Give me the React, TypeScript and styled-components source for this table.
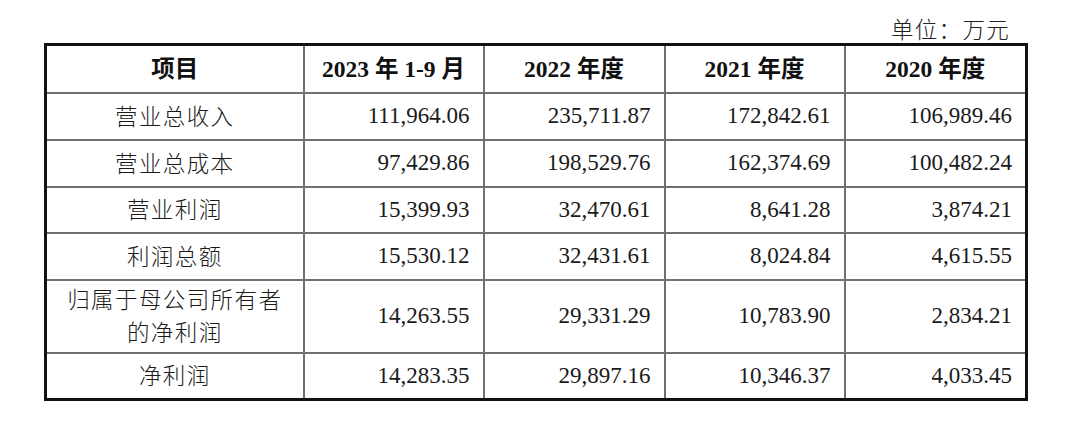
import React from "react";
import styled, { createGlobalStyle } from "styled-components";

const Global = createGlobalStyle`
  html, body { margin: 0; padding: 0; background: #ffffff; }
  body { font-family: "Liberation Serif", "Noto Sans CJK SC", serif; color: #1a1a1a; }
`;

const Page = styled.div`
  width: 1080px;
  height: 435px;
  box-sizing: border-box;
  padding: 15px 0 0 44px;
`;

const Sheet = styled.div`
  width: 981px;
  display: flex;
  flex-direction: column;
`;

const Unit = styled.div`
  align-self: flex-end;
  margin-right: 15px;
  font-size: 22.5px;
  letter-spacing: 1.3px;
  line-height: 26px;
  height: 28px;
  font-weight: 300;
  font-family: "Noto Sans CJK SC", serif;
  color: #222;
`;

const Table = styled.table`
  width: 981px;
  border-collapse: collapse;
  table-layout: fixed;
  border: 3px solid #111;
  font-size: 23px;
`;

const Cell = styled.td<{ $align?: "center" | "right"; $bold?: boolean }>`
  border: 2px solid #707070;
  padding: 0 13px 0 8px;
  text-align: ${(p) => p.$align ?? "right"};
  font-weight: ${(p) => (p.$bold ? 700 : 400)};
  line-height: 34px;
  vertical-align: middle;
  white-space: nowrap;
  color: #1a1a1a;
`;

const HeadCell = styled(Cell)`
  padding: 0 4px;
  font-size: 23.5px;
  color: #111;
`;

const LabelCell = styled(Cell)`
  white-space: normal;
  padding: 0 10px 2px;
  font-family: "Noto Sans CJK SC", serif;
  font-weight: 300;
  font-size: 22.5px;
  letter-spacing: 1.4px;
  line-height: 33px;
`;

const Row = styled.tr<{ $h: number }>`
  height: ${(p) => p.$h}px;
`;

const cols = [258, 180, 181, 180, 182];

const headers = ["项目", "2023 年 1-9 月", "2022 年度", "2021 年度", "2020 年度"];

const rows: { label: string; values: string[]; h: number }[] = [
  { label: "营业总收入", values: ["111,964.06", "235,711.87", "172,842.61", "106,989.46"], h: 47 },
  { label: "营业总成本", values: ["97,429.86", "198,529.76", "162,374.69", "100,482.24"], h: 47 },
  { label: "营业利润", values: ["15,399.93", "32,470.61", "8,641.28", "3,874.21"], h: 46 },
  { label: "利润总额", values: ["15,530.12", "32,431.61", "8,024.84", "4,615.55"], h: 47 },
  { label: "归属于母公司所有者的净利润", values: ["14,263.55", "29,331.29", "10,783.90", "2,834.21"], h: 73 },
  { label: "净利润", values: ["14,283.35", "29,897.16", "10,346.37", "4,033.45"], h: 47 },
];

export default function App() {
  return (
    <Page>
      <Global />
      <Sheet>
        <Unit>单位：万元</Unit>
        <Table>
          <colgroup>
            {cols.map((w, i) => (
              <col key={i} style={{ width: w }} />
            ))}
          </colgroup>
          <thead>
            <Row $h={48}>
              {headers.map((h) => (
                <HeadCell as="th" key={h} $align="center" $bold>
                  {h}
                </HeadCell>
              ))}
            </Row>
          </thead>
          <tbody>
            {rows.map((r) => (
              <Row key={r.label} $h={r.h}>
                <LabelCell $align="center">{r.label}</LabelCell>
                {r.values.map((v, i) => (
                  <Cell key={i}>{v}</Cell>
                ))}
              </Row>
            ))}
          </tbody>
        </Table>
      </Sheet>
    </Page>
  );
}
